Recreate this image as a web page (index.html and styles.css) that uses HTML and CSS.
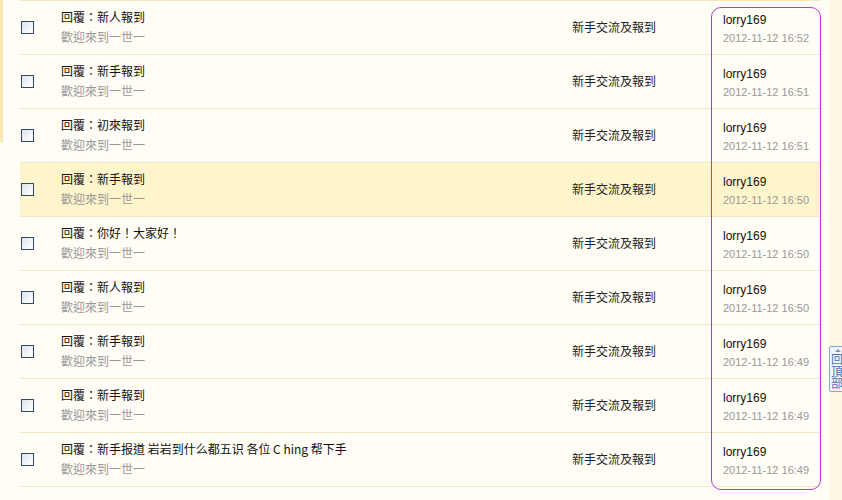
FILE: index.html
```html
<!DOCTYPE html>
<html>
<head>
<meta charset="utf-8">
<link rel="stylesheet" href="styles.css">
</head>
<body>
<div class="page">
  <div class="main">
    <div class="list">
      <div class="row">
        <div class="c-check"><span class="box"></span></div>
        <div class="c-title"><div class="t">回覆：新人報到</div><div class="s">歡迎來到一世一</div></div>
        <div class="c-forum">新手交流及報到</div>
        <div class="c-author"><div class="a">lorry169</div><div class="d">2012-11-12 16:52</div></div>
      </div>
      <div class="row">
        <div class="c-check"><span class="box"></span></div>
        <div class="c-title"><div class="t">回覆：新手報到</div><div class="s">歡迎來到一世一</div></div>
        <div class="c-forum">新手交流及報到</div>
        <div class="c-author"><div class="a">lorry169</div><div class="d">2012-11-12 16:51</div></div>
      </div>
      <div class="row">
        <div class="c-check"><span class="box"></span></div>
        <div class="c-title"><div class="t">回覆：初來報到</div><div class="s">歡迎來到一世一</div></div>
        <div class="c-forum">新手交流及報到</div>
        <div class="c-author"><div class="a">lorry169</div><div class="d">2012-11-12 16:51</div></div>
      </div>
      <div class="row hl">
        <div class="c-check"><span class="box"></span></div>
        <div class="c-title"><div class="t">回覆：新手報到</div><div class="s">歡迎來到一世一</div></div>
        <div class="c-forum">新手交流及報到</div>
        <div class="c-author"><div class="a">lorry169</div><div class="d">2012-11-12 16:50</div></div>
      </div>
      <div class="row">
        <div class="c-check"><span class="box"></span></div>
        <div class="c-title"><div class="t">回覆：你好！大家好！</div><div class="s">歡迎來到一世一</div></div>
        <div class="c-forum">新手交流及報到</div>
        <div class="c-author"><div class="a">lorry169</div><div class="d">2012-11-12 16:50</div></div>
      </div>
      <div class="row">
        <div class="c-check"><span class="box"></span></div>
        <div class="c-title"><div class="t">回覆：新人報到</div><div class="s">歡迎來到一世一</div></div>
        <div class="c-forum">新手交流及報到</div>
        <div class="c-author"><div class="a">lorry169</div><div class="d">2012-11-12 16:50</div></div>
      </div>
      <div class="row">
        <div class="c-check"><span class="box"></span></div>
        <div class="c-title"><div class="t">回覆：新手報到</div><div class="s">歡迎來到一世一</div></div>
        <div class="c-forum">新手交流及報到</div>
        <div class="c-author"><div class="a">lorry169</div><div class="d">2012-11-12 16:49</div></div>
      </div>
      <div class="row">
        <div class="c-check"><span class="box"></span></div>
        <div class="c-title"><div class="t">回覆：新手報到</div><div class="s">歡迎來到一世一</div></div>
        <div class="c-forum">新手交流及報到</div>
        <div class="c-author"><div class="a">lorry169</div><div class="d">2012-11-12 16:49</div></div>
      </div>
      <div class="row">
        <div class="c-check"><span class="box"></span></div>
        <div class="c-title"><div class="t">回覆：新手报道 岩岩到什么都五识 各位 C hing 帮下手</div><div class="s">歡迎來到一世一</div></div>
        <div class="c-forum">新手交流及報到</div>
        <div class="c-author"><div class="a">lorry169</div><div class="d">2012-11-12 16:49</div></div>
      </div>
    </div>
    <div class="mark"></div>
  </div>
  <div class="side">
    <a class="totop"><span class="tri"></span><span class="tt">回頂部</span></a>
  </div>
</div>
</body>
</html>
```
FILE: styles.css
```css
html, body {
  margin: 0;
  padding: 0;
}
body {
  background: #fffdf6;
  font-family: "Noto Sans CJK TC", "Liberation Sans", sans-serif;
  font-size: 12px;
  color: #000;
  overflow: hidden;
  height: 500px;
}
.page {
  display: flex;
  height: 500px;
}
.main {
  position: relative;
  width: 829px;
  flex: none;
  padding-left: 20px;
  box-sizing: border-box;
  background: linear-gradient(#f7e6ad, #f7e6ad) no-repeat 0 0 / 3px 142px;
}
.list {
  width: 800px;
  border-top: 1px solid #f3e7c4;
}
.row {
  display: flex;
  height: 53px;
  border-bottom: 1px solid #f3e7c4;
  box-sizing: content-box;
}
.row.hl {
  background: #fff5cc;
}
.c-check {
  width: 41px;
  flex: none;
  display: flex;
  align-items: center;
  padding-left: 1px;
  box-sizing: border-box;
}
.box {
  display: block;
  width: 11px;
  height: 11px;
  border: 1px solid #2f4b68;
  background: linear-gradient(135deg, #dde4ec 0%, #f4f6f8 60%, #ffffff 100%);
}
.c-title {
  width: 511px;
  flex: none;
  padding-top: 6px;
  line-height: 20px;
  white-space: nowrap;
}
.c-title .t {
  color: #111;
}
.c-title .s {
  color: #999;
}
.c-forum {
  width: 150px;
  flex: none;
  display: flex;
  align-items: center;
  color: #222;
  padding-bottom: 2px;
  box-sizing: border-box;
}
.c-author {
  flex: 1;
  padding-left: 1px;
  padding-top: 10px;
  font-family: "Liberation Sans", "Noto Sans CJK TC", sans-serif;
}
.c-author .a {
  font-size: 12px;
  line-height: 18px;
  color: #111;
}
.c-author .d {
  font-size: 11px;
  line-height: 18px;
  color: #999;
}
.mark {
  position: absolute;
  left: 711px;
  top: 7px;
  width: 110px;
  height: 483px;
  border: 1px solid #b43cc8;
  border-radius: 10px;
  box-sizing: border-box;
}
.side {
  flex: 1;
  background: #fff8e4;
  position: relative;
}
.totop {
  position: absolute;
  left: 0;
  top: 346px;
  width: 20px;
  height: 46px;
  border: 1px solid #7fa6d6;
  border-radius: 2px;
  background: #f2f6fb;
  box-sizing: border-box;
  display: flex;
  flex-direction: column;
  align-items: flex-start;
  padding-left: 1px;
}
.tri {
  display: block;
  width: 0;
  height: 0;
  margin: 2px 0 0 4px;
  border-left: 3px solid transparent;
  border-right: 3px solid transparent;
  border-bottom: 3px solid #6f96c8;
}
.tt {
  display: block;
  width: 12px;
  font-size: 12px;
  line-height: 12px;
  color: #4a74ad;
  margin-top: 1px;
}
```
